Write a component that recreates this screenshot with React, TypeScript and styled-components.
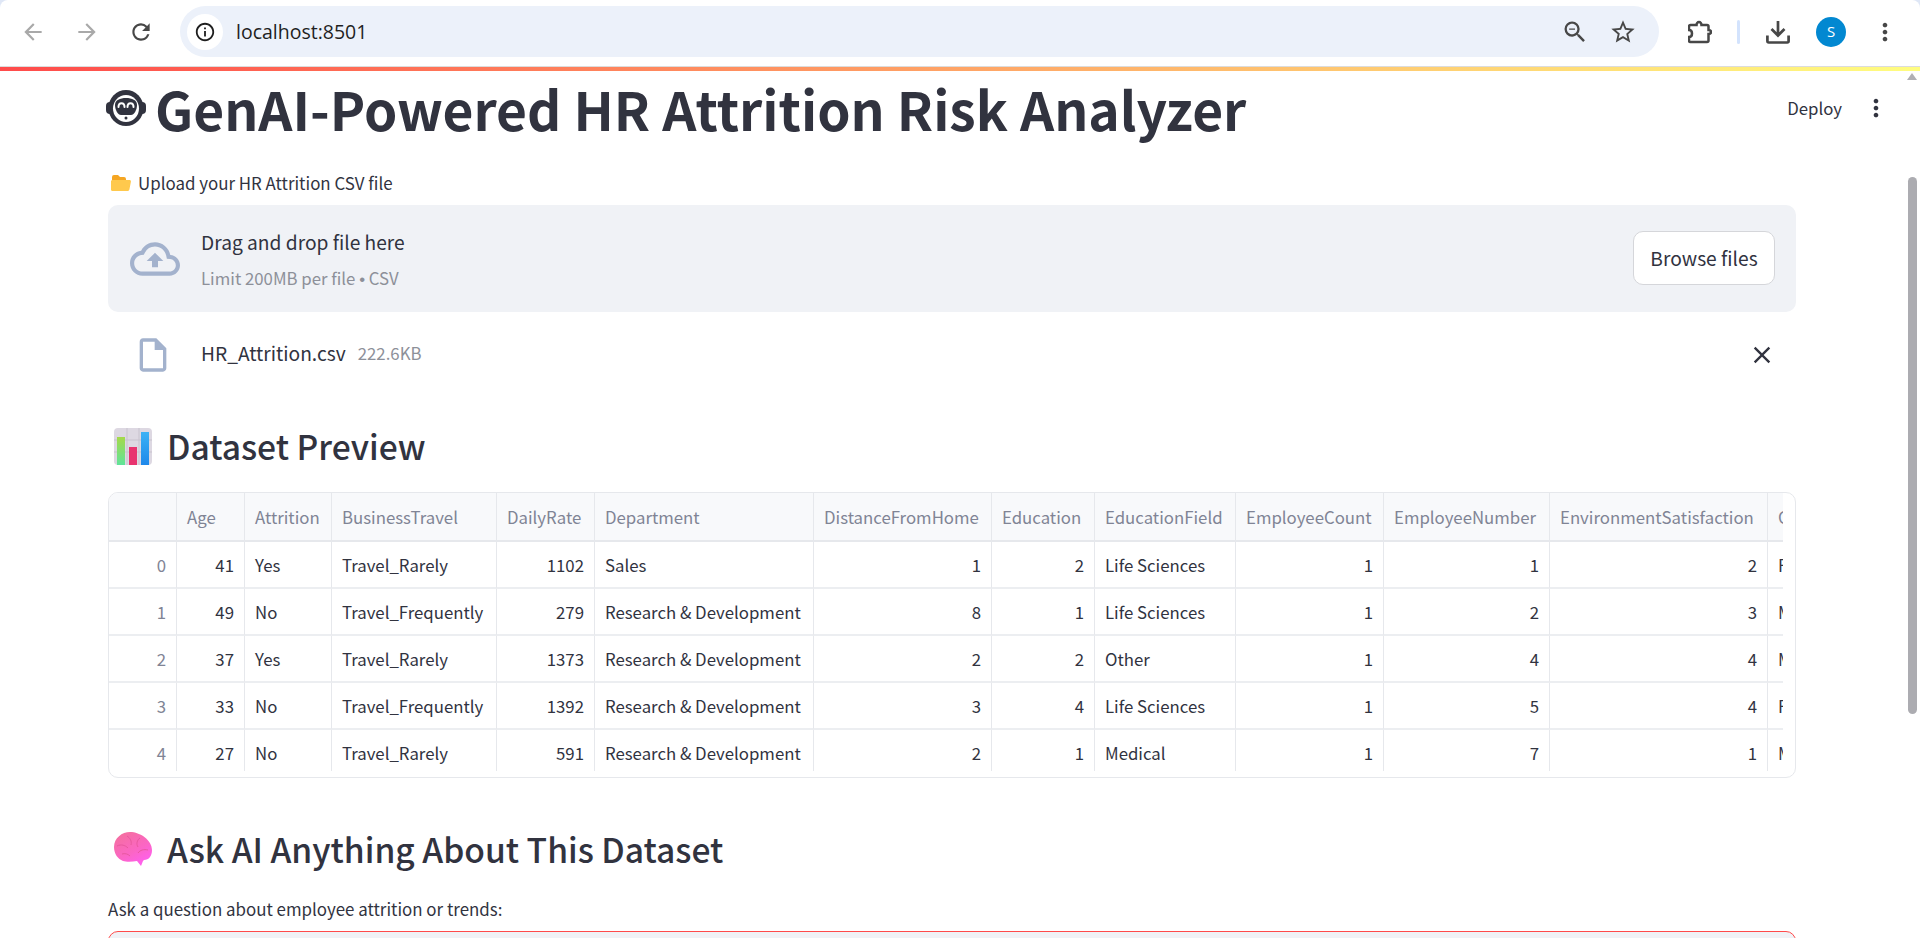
import React from 'react';
import styled, { createGlobalStyle } from 'styled-components';
import {
  MdArrowBack,
  MdArrowForward,
  MdRefresh,
  MdInfoOutline,
  MdZoomOut,
  MdStarBorder,
  MdMoreVert,
  MdOutlineCloudUpload,
  MdOutlineInsertDriveFile,
  MdClose,
} from 'react-icons/md';

const GlobalStyle = createGlobalStyle`
  html, body {
    margin: 0;
    height: 100%;
    overflow: hidden;
    background: #dfe7f6;
  }
  * { box-sizing: border-box; }
`;

const SOURCE = `"Noto Sans CJK SC", "Noto Sans", sans-serif`;

const columns = [68, 68, 87, 165, 98, 219, 178, 103, 141, 148, 166, 218, 100];
const headers = [
  '', 'Age', 'Attrition', 'BusinessTravel', 'DailyRate', 'Department', 'DistanceFromHome',
  'Education', 'EducationField', 'EmployeeCount', 'EmployeeNumber', 'EnvironmentSatisfaction', 'Gender',
];
const rows = [
  ['0', '41', 'Yes', 'Travel_Rarely', '1102', 'Sales', '1', '2', 'Life Sciences', '1', '1', '2', 'Female'],
  ['1', '49', 'No', 'Travel_Frequently', '279', 'Research & Development', '8', '1', 'Life Sciences', '1', '2', '3', 'Male'],
  ['2', '37', 'Yes', 'Travel_Rarely', '1373', 'Research & Development', '2', '2', 'Other', '1', '4', '4', 'Male'],
  ['3', '33', 'No', 'Travel_Frequently', '1392', 'Research & Development', '3', '4', 'Life Sciences', '1', '5', '4', 'Female'],
  ['4', '27', 'No', 'Travel_Rarely', '591', 'Research & Development', '2', '1', 'Medical', '1', '7', '1', 'Male'],
];
const textColumns = [2, 3, 5, 8, 12];

export default function App() {
  return (
    <>
      <GlobalStyle />
      <Window>
        <Toolbar>
          <NavGroup>
            <NavButton $muted><MdArrowBack /></NavButton>
            <NavButton $muted><MdArrowForward /></NavButton>
            <NavButton><MdRefresh /></NavButton>
          </NavGroup>
          <AddressBar>
            <InfoChip><MdInfoOutline /></InfoChip>
            <Url>localhost:8501</Url>
            <AddressActions>
              <AddressIcon><MdZoomOut /></AddressIcon>
              <AddressIcon><MdStarBorder /></AddressIcon>
            </AddressActions>
          </AddressBar>
          <ToolActions>
            <PuzzleIcon>
              <svg width="24" height="25" viewBox="0 0 24 25" fill="none" stroke="#474747" strokeWidth="2.500">
                <path d="M2.500 6H8.500c0-1.500 1-3 2.500-3s2.500 1.500 2.500 3H19a1.500 1.500 0 0 1 1.500 1.500V11c1.500 0 2.500.7 2.500 2s-1 2-2.500 2v6.500A1.500 1.500 0 0 1 19 23H2.500A1.500 1.500 0 0 1 1 21.500V18c2 0 3-1 3-3.500S3 11 1 11V7.500A1.500 1.500 0 0 1 2.500 6z" />
              </svg>
            </PuzzleIcon>
            <Separator />
            <DownloadIcon>
              <svg width="24" height="24" viewBox="0 0 24 24" fill="none" stroke="#474747" strokeWidth="2.700">
                <path d="M12 1v14M5.500 9l6.500 6.500L18.500 9" />
                <path d="M1.400 15.500v5.600c0 .8.5 1.400 1.400 1.400h18.400c.9 0 1.400-.6 1.400-1.400v-5.600" />
              </svg>
            </DownloadIcon>
            <Avatar>S</Avatar>
            <MenuIcon><MdMoreVert /></MenuIcon>
          </ToolActions>
        </Toolbar>
        <Decoration />
        <Main>
          <DeployBar>
            <DeployText>Deploy</DeployText>
            <MdMoreVert />
          </DeployBar>
          <Content>
            <Title>
              <svg width="40" height="36" viewBox="0 0 40 36">
                <ellipse cx="20" cy="18" rx="17.500" ry="18" fill="#31333f" />
                <rect x="0" y="12" width="8" height="12" rx="4" fill="#31333f" />
                <rect x="32" y="12" width="8" height="12" rx="4" fill="#31333f" />
                <ellipse cx="20" cy="18.500" rx="13" ry="13.500" fill="#fff" />
                <path d="M9 15c0-5 5-7 11-7s11 2 11 7c0 5-3 10-6 10H15c-3 0-6-5-6-10z" fill="#31333f" />
                <path d="M12.500 17c0-5 6-5 6 0M21.500 17c0-5 6-5 6 0" fill="none" stroke="#fff" strokeWidth="2" strokeLinecap="round" />
                <circle cx="20" cy="28" r="1.500" fill="#31333f" />
              </svg>
              GenAI-Powered HR Attrition Risk Analyzer
            </Title>
            <UploadLabel>
              <svg width="20" height="18" viewBox="0 0 20 18">
                <path d="M1 3a2 2 0 0 1 2-2h4l2 2h4a2 2 0 0 1 2 2v2H1z" fill="#f5a623" />
                <path d="M1.200 17c-.7 0-1.200-.5-1.200-1.200V7.500C0 6.700.6 6 1.500 6h17c.9 0 1.600.8 1.400 1.700l-1.500 7.800c-.2.9-.9 1.500-1.800 1.500z" fill="#ffc94d" />
              </svg>
              Upload your HR Attrition CSV file
            </UploadLabel>
            <Dropzone>
              <DropIcon><MdOutlineCloudUpload /></DropIcon>
              <DropText>
                <DropTitle>Drag and drop file here</DropTitle>
                <DropHint>Limit 200MB per file <Bullet>•</Bullet> CSV</DropHint>
              </DropText>
              <BrowseButton>Browse files</BrowseButton>
            </Dropzone>
            <FileRow>
              <FileIcon><MdOutlineInsertDriveFile /></FileIcon>
              <FileName>HR_Attrition.csv</FileName>
              <FileSize>222.6KB</FileSize>
              <RemoveIcon><MdClose /></RemoveIcon>
            </FileRow>
            <SectionTitle $top={41}>
              <svg width="38" height="37" viewBox="0 0 38 37">
                <defs>
                  <linearGradient id="barGreen" x1="0" y1="0" x2="0" y2="1">
                    <stop offset="0" stopColor="#a5d94a" />
                    <stop offset="1" stopColor="#5fe39a" />
                  </linearGradient>
                  <linearGradient id="barBlue" x1="0" y1="0" x2="0" y2="1">
                    <stop offset="0" stopColor="#3cb2f5" />
                    <stop offset="1" stopColor="#1f88ea" />
                  </linearGradient>
                </defs>
                <rect width="38" height="37" rx="4" fill="#ddd8e2" />
                <path d="M0 12h38M0 24h38M13 0v37M25 0v37" stroke="#c8c3ce" strokeWidth="1" />
                <rect x="3" y="9" width="8" height="28" fill="url(#barGreen)" />
                <rect x="15" y="19" width="8" height="18" fill="#e8336f" />
                <rect x="27" y="4" width="8" height="33" fill="url(#barBlue)" />
              </svg>
              Dataset Preview
            </SectionTitle>
            <TableFrame>
              <TableClip>
                <DataTable>
                  <colgroup>
                    {columns.map((w, i) => <Col key={i} $w={w} />)}
                  </colgroup>
                  <thead>
                    <tr>
                      {headers.map((h, i) => <HeadCell key={i}>{h}</HeadCell>)}
                    </tr>
                  </thead>
                  <tbody>
                    {rows.map((row) => (
                      <tr key={row[0]}>
                        {row.map((value, i) => (
                          <Cell key={i} $index={i === 0} $text={textColumns.includes(i)}>{value}</Cell>
                        ))}
                      </tr>
                    ))}
                  </tbody>
                </DataTable>
              </TableClip>
            </TableFrame>
            <SectionTitle $top={43}>
              <svg width="38" height="34" viewBox="0 0 38 34">
                <defs>
                  <linearGradient id="brain" x1="0.1" y1="0" x2="0.7" y2="1">
                    <stop offset="0" stopColor="#f4709c" />
                    <stop offset="0.6" stopColor="#fb66c4" />
                    <stop offset="1" stopColor="#ff5ff0" />
                  </linearGradient>
                </defs>
                <path d="M16 0C26 0 38 8 38 18c0 6-3 10-8 10l-1 1-2 5-4-5c-5 1-11 1-14 0C4 27 0 22 0 15 0 6 8 0 16 0z" fill="url(#brain)" />
                <path d="M3 14c4-2 8-1 11 2M13 4c3 2 5 5 4 9M26 6c-3 2-4 6-2 9M34 18c-4-1-8 0-10 3M8 22c3-1 6 0 8 2" fill="none" stroke="#e8589f" strokeWidth="1" />
              </svg>
              Ask AI Anything About This Dataset
            </SectionTitle>
            <QuestionLabel>Ask a question about employee attrition or trends:</QuestionLabel>
            <QuestionInput />
          </Content>
          <ScrollTrack>
            <ScrollArrow />
            <ScrollThumb />
          </ScrollTrack>
        </Main>
      </Window>
    </>
  );
}

const Window = styled.div`
  height: 938px;
  display: flex;
  flex-direction: column;
  overflow: hidden;
  background: #fff;
  border-radius: 8px 8px 0 0;
`;

const Toolbar = styled.div`
  height: 67px;
  flex: none;
  display: flex;
  align-items: flex-start;
  padding: 6px 0 0 12px;
  border-bottom: 1px solid #dcdcdc;
`;

const NavGroup = styled.div`
  display: flex;
  gap: 12px;
  width: 168px;
  flex: none;
`;

const NavButton = styled.div<{ $muted?: boolean }>`
  width: 42px;
  height: 51px;
  display: flex;
  align-items: center;
  justify-content: center;
  font-size: 26px;
  color: ${(p) => (p.$muted ? '#a9a9a9' : '#474747')};
`;

const AddressBar = styled.div`
  width: 1479px;
  height: 51px;
  flex: none;
  display: flex;
  align-items: center;
  padding: 0 22px 0 7px;
  border-radius: 26px;
  background: #ecf1fa;
`;

const InfoChip = styled.div`
  width: 36px;
  height: 36px;
  border-radius: 50%;
  background: #fff;
  display: flex;
  align-items: center;
  justify-content: center;
  font-size: 22px;
  color: #1f1f1f;
`;

const Url = styled.div`
  margin-left: 13px;
  font: 400 19.5px/24px "Open Sans", sans-serif;
  color: #1f1f1f;
`;

const AddressActions = styled.div`
  margin-left: auto;
  display: flex;
  gap: 20px;
`;

const AddressIcon = styled.div`
  width: 28px;
  height: 28px;
  font-size: 28px;
  line-height: 0;
  color: #474747;
`;

const ToolActions = styled.div`
  flex: 1;
  height: 51px;
  display: flex;
  align-items: center;
  padding-left: 29px;
`;

const PuzzleIcon = styled.div`
  width: 24px;
  height: 25px;
  line-height: 0;
`;

const DownloadIcon = styled.div`
  width: 24px;
  height: 24px;
  line-height: 0;
  margin-left: 2px;
`;

const MenuIcon = styled.div`
  width: 28px;
  height: 28px;
  margin-left: 25px;
  font-size: 28px;
  line-height: 0;
  color: #474747;
`;

const Separator = styled.div`
  width: 3px;
  height: 24px;
  margin: 0 24px 0 25px;
  background: #d3e3fd;
  border-radius: 2px;
`;

const Avatar = styled.div`
  width: 30px;
  height: 30px;
  margin-left: 26px;
  border-radius: 50%;
  background: #0288d1;
  color: #fff;
  display: flex;
  align-items: center;
  justify-content: center;
  font: 400 15px/1 "Open Sans", sans-serif;
`;

const Decoration = styled.div`
  height: 4px;
  flex: none;
  background: linear-gradient(90deg, #ff4b4b, #fffd80);
`;

const Main = styled.main`
  position: relative;
  flex: 1;
  min-height: 0;
  overflow: hidden;
  font-family: ${SOURCE};
  color: #31333f;
`;

const DeployBar = styled.div`
  position: absolute;
  top: 23px;
  right: 30px;
  display: flex;
  align-items: center;
  gap: 20px;
  font-size: 28px;
  line-height: 0;
  color: #31333f;
`;

const DeployText = styled.span`
  font-size: 16.8px;
  line-height: 28px;
`;

const Content = styled.div`
  display: flex;
  flex-direction: column;
  padding: 0 124px 0 108px;
`;

const Title = styled.h1`
  margin: 5px 0 0 -2px;
  display: flex;
  align-items: center;
  gap: 9px;
  font-size: 53.3px;
  line-height: 64px;
  font-weight: 700;
`;

const UploadLabel = styled.div`
  margin-top: 31px;
  padding-left: 3px;
  display: flex;
  align-items: center;
  gap: 7px;
  font-size: 16.9px;
  line-height: 24px;
`;

const Dropzone = styled.div`
  margin-top: 10px;
  height: 107px;
  display: flex;
  align-items: center;
  padding: 0 21px 0 22px;
  border-radius: 10px;
  background: #f0f2f6;
`;

const DropIcon = styled.div`
  width: 50px;
  font-size: 50px;
  line-height: 0;
  color: #a3b2cd;
`;

const DropText = styled.div`
  margin-left: 21px;
  padding-top: 2px;
  flex: 1;
`;

const DropTitle = styled.div`
  font-size: 19.2px;
  line-height: 30px;
`;

const DropHint = styled.div`
  margin-top: 9px;
  font-size: 16.8px;
  line-height: 24px;
  color: #8d9099;
`;

const Bullet = styled.span`
  font-family: "Liberation Sans", sans-serif;
`;

const BrowseButton = styled.div`
  width: 142px;
  height: 54px;
  margin-bottom: 2px;
  display: flex;
  align-items: center;
  justify-content: center;
  border: 1px solid #d5d6da;
  border-radius: 10px;
  background: #fff;
  font-size: 19.2px;
`;

const FileRow = styled.div`
  margin-top: 17px;
  height: 48px;
  display: flex;
  align-items: center;
  padding-left: 25px;
`;

const FileIcon = styled.div`
  width: 40px;
  margin-top: 3px;
  font-size: 40px;
  line-height: 0;
  color: #a3b2cd;
`;

const FileName = styled.div`
  margin-left: 28px;
  font-size: 19.2px;
`;

const FileSize = styled.div`
  margin-left: 12px;
  font-size: 16.8px;
  color: #8d9099;
`;

const RemoveIcon = styled.div`
  margin: 3px 20px 0 auto;
  font-size: 28px;
  line-height: 0;
  color: #31333f;
`;

const SectionTitle = styled.h2<{ $top: number }>`
  margin: ${(p) => p.$top}px 0 0;
  padding-left: 6px;
  height: 56px;
  display: flex;
  align-items: center;
  gap: 15px;
  font-size: 33.6px;
  line-height: 56px;
  font-weight: 500;
`;

const TableFrame = styled.div`
  margin-top: 18px;
  height: 286px;
  border: 1px solid #e6e8ec;
  border-radius: 10px;
  overflow: hidden;
`;

const TableClip = styled.div`
  width: calc(100% - 12px);
  height: calc(100% - 6px);
  overflow: hidden;
`;

const DataTable = styled.table`
  table-layout: fixed;
  border-collapse: separate;
  border-spacing: 0;
  width: 1759px;
  font-size: 16.8px;
`;

const Col = styled.col<{ $w: number }>`
  width: ${(p) => p.$w}px;
`;

const HeadCell = styled.th`
  height: 49px;
  padding: 0 10px;
  background: #f8f9fb;
  border-right: 1px solid #e6e8ec;
  border-bottom: 2px solid #e6e8ec;
  text-align: left;
  font-weight: 400;
  color: #808495;
  white-space: nowrap;
  overflow: hidden;
`;

const Cell = styled.td<{ $index: boolean; $text: boolean }>`
  height: 47px;
  padding: 0 10px;
  border-right: 1px solid #e6e8ec;
  border-bottom: 2px solid #eceef1;
  text-align: ${(p) => (p.$text ? 'left' : 'right')};
  color: ${(p) => (p.$index ? '#808495' : '#31333f')};
  white-space: nowrap;
  overflow: hidden;
`;

const QuestionLabel = styled.div`
  margin-top: 20px;
  font-size: 16.9px;
  line-height: 24px;
`;

const QuestionInput = styled.div`
  margin-top: 10px;
  height: 80px;
  border: 1px solid #ff4b4b;
  border-radius: 10px;
  background: #f0f2f6;
`;

const ScrollTrack = styled.div`
  position: absolute;
  top: 0;
  right: 0;
  bottom: 0;
  width: 15px;
  background: #fff;
`;

const ScrollArrow = styled.div`
  width: 0;
  margin: 2px 0 0 2px;
  border-left: 5px solid transparent;
  border-right: 5px solid transparent;
  border-bottom: 7px solid #b0afb4;
`;

const ScrollThumb = styled.div`
  width: 9px;
  height: 537px;
  margin: 97px 0 0 3px;
  border-radius: 5px;
  background: #acacb1;
`;
